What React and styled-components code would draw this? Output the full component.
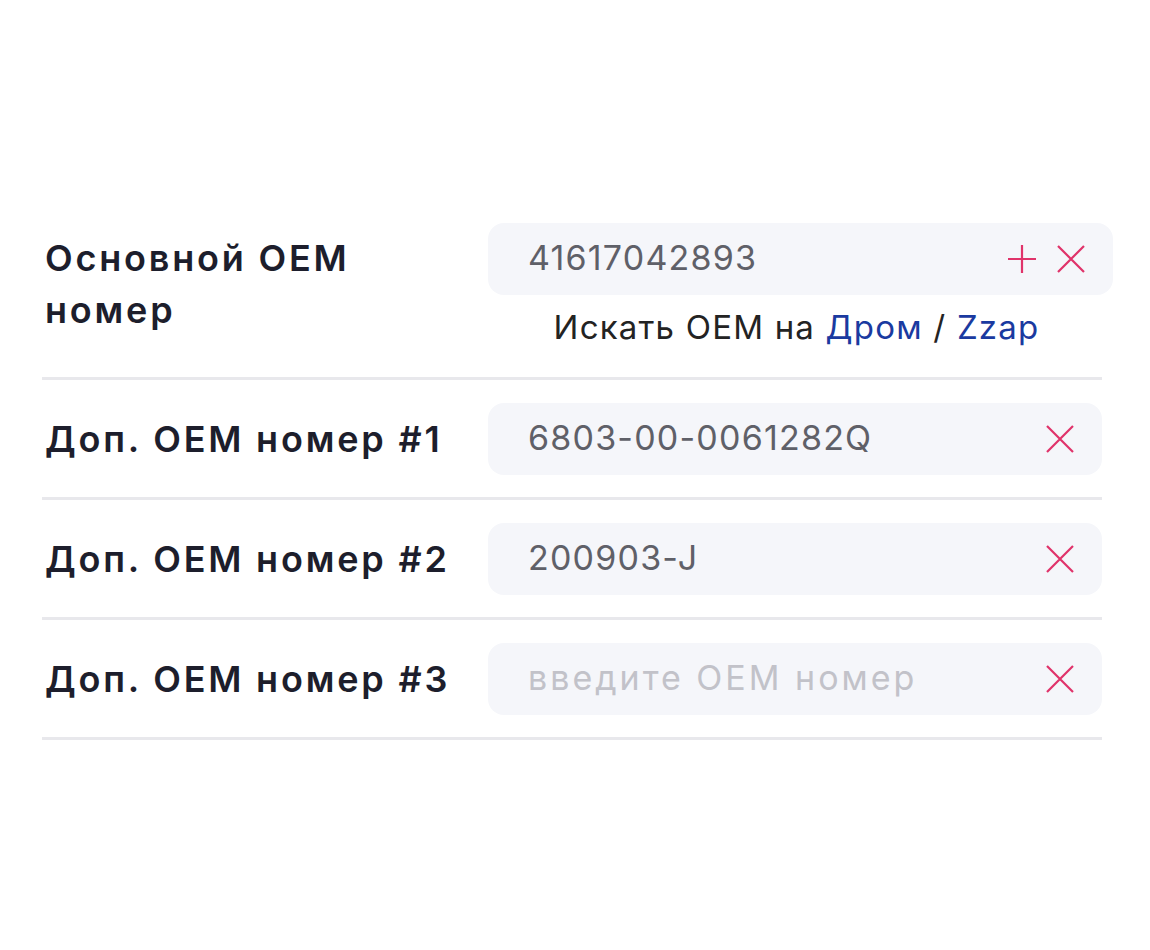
import React from "react";
import styled, { createGlobalStyle } from "styled-components";

const GlobalStyle = createGlobalStyle`
  html, body {
    margin: 0;
    padding: 0;
    background: #ffffff;
  }
  body {
    font-family: Inter, "Noto Sans", sans-serif;
    color: #1d1e2c;
  }
`;

const Page = styled.div`
  width: 1150px;
  height: 950px;
  box-sizing: border-box;
  padding: 200px 48px 0 42px;
`;

const Row = styled.div`
  display: grid;
  grid-template-columns: 446px 1fr;
  align-items: ${(p) => (p.$top ? "start" : "center")};
  padding: 23px 0 22px;
  border-bottom: 3px solid #e8e8ec;
`;

const Label = styled.div`
  font-size: 36px;
  font-weight: 600;
  letter-spacing: 2.8px;
  line-height: 52px;
  color: #1d1e2c;
  padding-left: 3px;
  margin-top: ${(p) => (p.$top ? "9px" : "0")};
`;

const Field = styled.div`
  display: flex;
  flex-direction: column;
  align-items: stretch;
  margin-right: ${(p) => (p.$wide ? "-11px" : "0")};
`;

const InputBox = styled.div`
  height: 72px;
  border-radius: 16px;
  background: #f5f6fa;
  display: flex;
  align-items: center;
  padding: 0 27px 0 40px;
`;

const Value = styled.div`
  flex: 1;
  font-size: 34px;
  line-height: 40px;
  margin-top: -2px;
  letter-spacing: ${(p) => (p.$placeholder ? "3px" : "1.2px")};
  color: ${(p) => (p.$placeholder ? "#c2c2c9" : "#5f6068")};
`;

const Icons = styled.div`
  display: flex;
  align-items: center;
  gap: 19px;
`;

const IconButton = styled.svg`
  width: 30px;
  height: 30px;
  display: block;
`;

const SearchLine = styled.div`
  text-align: center;
  font-size: 33px;
  line-height: 40px;
  letter-spacing: 1.2px;
  margin-top: 12px;
  margin-bottom: 8px;
  color: #232323;
  padding-right: 8px;
`;

const Link = styled.span`
  color: #1a3aa0;
`;

const Plus = () => (
  <IconButton viewBox="0 0 30 30">
    <path d="M15 1v28M1 15h28" stroke="#e0336a" strokeWidth="2.2" fill="none" />
  </IconButton>
);

const Cross = () => (
  <IconButton viewBox="0 0 30 30">
    <path d="M2 2l26 26M28 2L2 28" stroke="#e0336a" strokeWidth="2.2" fill="none" />
  </IconButton>
);

const extras = [
  { label: "Доп. ОЕМ номер #1", value: "6803-00-0061282Q" },
  { label: "Доп. ОЕМ номер #2", value: "200903-J" },
  { label: "Доп. ОЕМ номер #3", value: "" },
];

export default function App() {
  return (
    <Page>
      <GlobalStyle />
      <Row $top>
        <Label $top>
          Основной ОЕМ
          <br />
          номер
        </Label>
        <Field $wide>
          <InputBox>
            <Value>41617042893</Value>
            <Icons>
              <Plus />
              <Cross />
            </Icons>
          </InputBox>
          <SearchLine>
            Искать ОЕМ на <Link>Дром</Link> / <Link>Zzap</Link>
          </SearchLine>
        </Field>
      </Row>
      {extras.map((item) => (
        <Row key={item.label}>
          <Label>{item.label}</Label>
          <Field>
            <InputBox>
              <Value $placeholder={!item.value}>
                {item.value || "введите ОЕМ номер"}
              </Value>
              <Icons>
                <Cross />
              </Icons>
            </InputBox>
          </Field>
        </Row>
      ))}
    </Page>
  );
}
